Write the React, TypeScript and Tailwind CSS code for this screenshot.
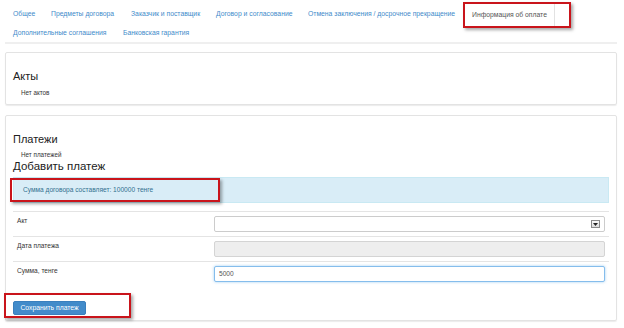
const topTabs = [
  { label: 'Общее', w: 'w-[38px]' },
  { label: 'Предметы договора', w: 'w-[80px]' },
  { label: 'Заказчик и поставщик', w: 'w-[85px]' },
  { label: 'Договор и согласование', w: 'w-[92px]' },
  { label: 'Отмена заключения / досрочное прекращение', w: 'w-[163px]' },
];

const bottomTabs = [
  { label: 'Дополнительные соглашения', w: 'w-[110px]' },
  { label: 'Банковская гарантия', w: 'w-[90px]' },
];

// red callout frame drawn over the screenshot
function Highlight({ className }: { className: string }) {
  return (
    <div
      className={`absolute border-2 border-[#c9141b] shadow-[2px_2px_3px_rgba(0,0,0,0.35)] pointer-events-none ${className}`}
    />
  );
}

function FormRow({ label, children }: { label: string; children: React.ReactNode }) {
  return (
    <div className="flex h-[25px] border-t border-[#e4e4e4] pt-[4px]">
      <div className="w-[201px] pl-[4px] pt-[1px] text-[6.6px] leading-[8px] text-[#333]">{label}</div>
      <div className="w-[391px]">{children}</div>
    </div>
  );
}

export default function App() {
  return (
    <div className="relative w-[624px] h-[328px] overflow-hidden bg-white font-['Liberation_Sans',Arial,sans-serif] text-[#333]">
      <div className="pl-[5px] pr-[7px] pt-[3px]">
        {/* Tabs */}
        <div className="flex h-[23px] items-center text-[6.8px]">
          {topTabs.map((t) => (
            <div key={t.label} className={`${t.w} px-[8px] whitespace-nowrap text-[#428bca]`}>
              {t.label}
            </div>
          ))}
          <div className="w-[92px] h-[23px] px-[8px] flex items-center whitespace-nowrap bg-white border-x border-t border-[#e2e2e2] text-[#555]">
            Информация об оплате
          </div>
        </div>
        <div className="flex h-[14px] items-center text-[6.8px]">
          {bottomTabs.map((t) => (
            <div key={t.label} className={`${t.w} px-[8px] whitespace-nowrap text-[#428bca]`}>
              {t.label}
            </div>
          ))}
        </div>
        <div className="mt-[2px] h-[2px] bg-[#efefef]" />

        {/* Acts panel */}
        <div className="mt-[8px] h-[53px] rounded-[2px] border border-[#e3e3e3] shadow-[0_1px_1px_rgba(0,0,0,0.08)] px-[7px] pt-[16px]">
          <div className="text-[11px] leading-[14px] text-[#222]">Акты</div>
          <div className="mt-[5px] pl-[8px] text-[6.3px] leading-[9px]">Нет актов</div>
        </div>

        {/* Payments panel */}
        <div className="mt-[10px] h-[206px] rounded-[2px] border border-[#e3e3e3] shadow-[0_1px_1px_rgba(0,0,0,0.08)] px-[7px] pt-[16px]">
          <div className="text-[11px] leading-[14px] text-[#222]">Платежи</div>
          <div className="mt-[4px] pl-[8px] text-[6.3px] leading-[9px]">Нет платежей</div>
          <div className="text-[11.5px] leading-[14px] text-[#222]">Добавить платеж</div>

          <div className="mt-[4px] h-[26px] flex items-center pl-[9px] bg-[#d9edf7] border border-[#c9e9f3] text-[6.6px] text-[#31708f]">
            Сумма договора составляет: 100000 тенге
          </div>

          <div className="mt-[8px]">
            <FormRow label="Акт">
              <div className="h-[16px] flex items-center justify-end pr-[4px] bg-white border border-[#ccc] rounded-[2px]">
                <div className="w-[9px] h-[8px] flex items-center justify-center border border-[#8a8a8a] bg-[linear-gradient(#fafafa,#dcdcdc)]">
                  <svg width="5" height="3" viewBox="0 0 5 3">
                    <path d="M0 0h5L2.5 3z" fill="#222" />
                  </svg>
                </div>
              </div>
            </FormRow>
            <FormRow label="Дата платежа">
              <div className="h-[16px] bg-[#eeeeee] border border-[#d4d4d4] rounded-[2px]" />
            </FormRow>
            <FormRow label="Сумма, тенге">
              <div className="h-[16px] flex items-center pl-[4px] bg-white border border-[#85bdec] rounded-[2px] shadow-[0_0_3px_rgba(102,175,233,0.6)] text-[6.6px] text-[#555]">
                5000
              </div>
            </FormRow>
          </div>

          <div className="mt-[15px] w-[73px] h-[14px] flex items-center justify-center rounded-[2px] bg-[#428bca] border border-[#3a7fbd] text-[6.8px] text-white">
            Сохранить платеж
          </div>
        </div>
      </div>

      <Highlight className="left-[463px] top-[2px] w-[108px] h-[26px]" />
      <Highlight className="left-[10px] top-[178px] w-[210px] h-[24px]" />
      <Highlight className="left-[4px] top-[293px] w-[127px] h-[25px]" />
    </div>
  );
}
